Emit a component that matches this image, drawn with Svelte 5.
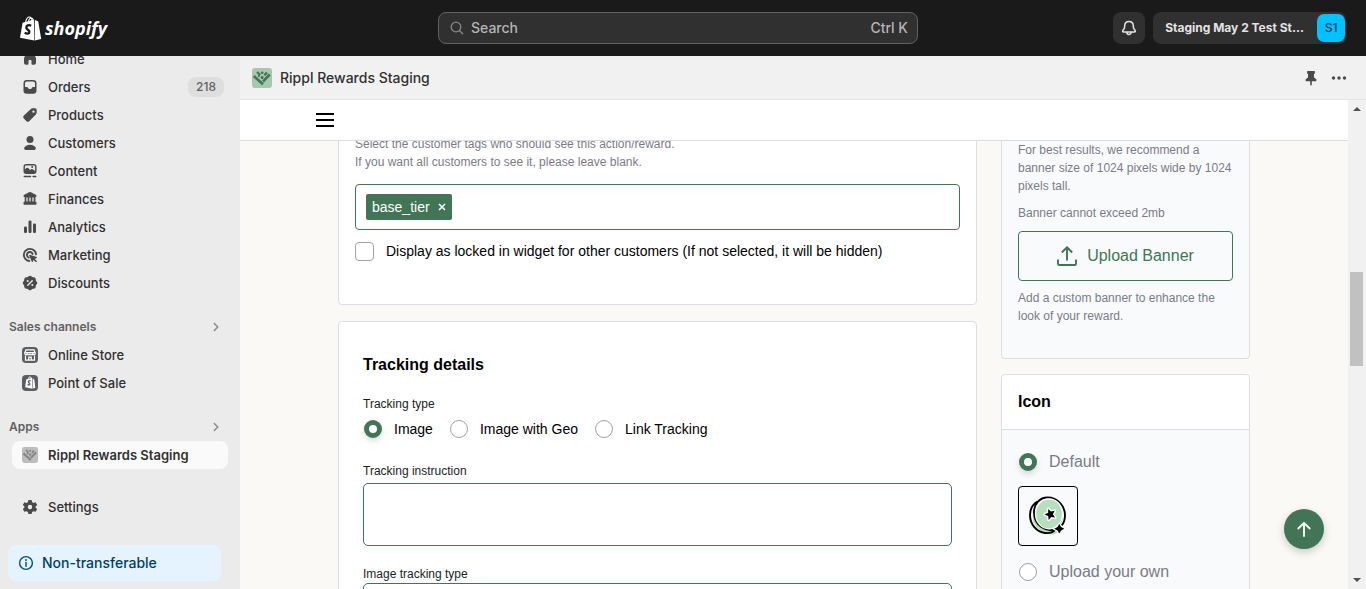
<script>
  const nav = [
    { name: 'Home', icon: 'home' },
    { name: 'Orders', icon: 'orders', badge: '218' },
    { name: 'Products', icon: 'products' },
    { name: 'Customers', icon: 'customers' },
    { name: 'Content', icon: 'content' },
    { name: 'Finances', icon: 'finances' },
    { name: 'Analytics', icon: 'analytics' },
    { name: 'Marketing', icon: 'marketing' },
    { name: 'Discounts', icon: 'discounts' }
  ];
  const channels = [
    { name: 'Online Store', icon: 'store' },
    { name: 'Point of Sale', icon: 'pos' }
  ];
  const trackingTypes = ['Image', 'Image with Geo', 'Link Tracking'];
  let tracking = $state('Image');
  let iconChoice = $state('default');
  let locked = $state(false);
  let instruction = $state('');
</script>

{#snippet glyph(name)}
  <svg class="icon" viewBox="0 0 20 20" fill="currentColor" aria-hidden="true">
    {#if name === 'home'}
      <path d="M8.3 4a2.5 2.5 0 0 1 3.4 0l3.3 3.2a3.2 3.2 0 0 1 1 2.3v4.3a2 2 0 0 1-2 2h-1.500a1 1 0 0 1-1-1V12a1 1 0 0 0-1-1h-1a1 1 0 0 0-1 1v2.800a1 1 0 0 1-1 1H6a2 2 0 0 1-2-2V9.500a3.200 3.200 0 0 1 1-2.300z" />
    {:else if name === 'orders'}
      <path fill-rule="evenodd" d="M6.800 3h6.400A3.300 3.300 0 0 1 16.500 6.300v7.200a3.200 3.200 0 0 1-3.200 3.200H6.700a3.200 3.200 0 0 1-3.200-3.200V6.300A3.300 3.300 0 0 1 6.800 3zm.2 1.500c-1.100 0-2 .8-2 1.900V10h1.700c.6 0 1.100.3 1.400.8l.3.600c.3.400.9.600 1.600.600s1.300-.2 1.600-.6l.3-.6c.3-.5.8-.8 1.400-.8H15V6.400c0-1.100-.9-1.900-2-1.900z" />
    {:else if name === 'products'}
      <path fill-rule="evenodd" d="M10.600 4.200A3 3 0 0 1 12.700 3.300h2.200a1.800 1.800 0 0 1 1.800 1.800v2.200a3 3 0 0 1-.9 2.100l-6.400 6.500a2.200 2.200 0 0 1-3.200 0l-2.300-2.300a2.200 2.200 0 0 1 0-3.200zM13.500 7.800a1.200 1.200 0 1 0 0-2.400 1.200 1.200 0 0 0 0 2.400z" />
    {:else if name === 'customers'}
      <circle cx="10" cy="6.500" r="3.500" />
      <path d="M4.300 14.600C5.300 12.700 7.500 11.700 10 11.700s4.700 1 5.700 2.900c.6 1.100-.2 2.400-1.400 2.400H5.700c-1.200 0-2-1.300-1.400-2.400z" />
    {:else if name === 'content'}
      <path fill-rule="evenodd" d="M6.200 3h7.600a2.700 2.700 0 0 1 2.700 2.700v4.600a2.700 2.700 0 0 1-2.700 2.700H6.200a2.700 2.700 0 0 1-2.700-2.700V5.700A2.700 2.700 0 0 1 6.200 3zm.1 1.400c-.8 0-1.400.5-1.400 1.300v2.700l1.500-1.300a1.300 1.300 0 0 1 1.700 0l2 2 1-.8a1.300 1.300 0 0 1 1.600 0l2.400 1.800V5.700c0-.8-.6-1.300-1.400-1.300zM12.200 7a1 1 0 1 0 0-2 1 1 0 0 0 0 2zM4.300 14.700h6.200a.7.7 0 0 1 0 1.500H4.300a.7.7 0 0 1 0-1.500zm8.800 0h2.600a.7.7 0 0 1 0 1.500h-2.600a.7.7 0 0 1 0-1.500z" />
    {:else if name === 'finances'}
      <path d="M9 3.200a2.300 2.300 0 0 1 2 0l4.700 2.500c.5.300.8.700.8 1.200 0 .7-.5 1.100-1.100 1.100v4.700h.3c.5 0 .8.400.8.800v1.300c0 .7-.5 1-1 1h-11c-.6 0-1-.4-1-1v-1.300c0-.4.300-.8.800-.8h.4V8c-.7 0-1.200-.5-1.200-1.100 0-.5.3-.9.800-1.200z" />
      <path stroke="#ebebeb" stroke-width="1.300" d="M7 8.500v4M10 8.500v4M13 8.500v4" />
    {:else if name === 'analytics'}
      <rect x="4" y="9.500" width="3" height="6.500" rx="1.200" />
      <rect x="8.500" y="3.500" width="3" height="12.500" rx="1.200" />
      <rect x="13" y="6.500" width="3" height="9.500" rx="1.200" />
    {:else if name === 'marketing'}
      <g fill="none" stroke="currentColor" stroke-width="1.900" stroke-linecap="round">
        <path d="M9.300 16A6.100 6.100 0 1 1 16 9.300" />
        <path d="M8.700 12.500A2.900 2.900 0 1 1 12.600 8.900" />
      </g>
      <path d="M9.900 9.700l6.700 2.200c.5.200.5.800 0 1l-1.800 1 2 2c.5.500-.6 1.600-1.100 1.100l-2-2-1 1.700c-.2.400-.8.400-1-.1L9.200 10.400c-.1-.4.300-.8.700-.7z" />
    {:else if name === 'discounts'}
      <g><rect x="4.300" y="4.300" width="11.400" height="11.400" rx="2" /><rect x="4.300" y="4.300" width="11.400" height="11.400" rx="2" transform="rotate(45 10 10)" /></g>
      <path stroke="#ebebeb" stroke-width="1.400" stroke-linecap="round" d="M7.800 12.200l4.400-4.400" /><circle cx="7.700" cy="8" r="1" fill="#ebebeb" /><circle cx="12.300" cy="12" r="1" fill="#ebebeb" />
    {:else if name === 'store'}
      <rect x="2" y="2" width="16" height="16" rx="4" fill="#5c5f62" />
      <path fill="none" stroke="#fff" stroke-width="1.200" d="M6 4.800h8l1.300 3.400c0 2-2.600 2-2.700.2 0 1.800-2.600 1.800-2.600 0 0 1.800-2.600 1.800-2.600 0-.1 1.800-2.700 1.800-2.700-.2zM4.800 7.600h10.400M5.500 10.500v4.700h9v-4.700M8.800 15v-2.800h2.400V15" />
    {:else if name === 'pos'}
      <rect x="2" y="2" width="16" height="16" rx="4" fill="#5c5f62" />
      <path fill="#fff" d="M6.200 6.400l5.800-1.600.6 10.900-7.500-1.500zM12.600 5.200l1.700 1.600 1 7.900-2.100.8z" />
      <path d="M8.300 5.600c.5-2 2.400-2.300 3-.5" fill="none" stroke="#fff" />
      <path d="M10.700 8c-1.300-.6-2.500-.1-2.400.9.100 1 1.700 1.100 1.600 2.200-.1 1-1.300 1-2.300.3" fill="none" stroke="#5c5f62" stroke-width="1.300" />
    {:else if name === 'settings'}
      <path fill-rule="evenodd" d="M8.400 3h3.200l.5 2.100 1.400.8 2.100-.6 1.600 2.700-1.600 1.400v1.300l1.600 1.400-1.600 2.700-2.100-.6-1.400.8-.5 2H8.400l-.5-2-1.400-.8-2.100.6-1.600-2.700 1.600-1.400V9.400L2.800 8l1.600-2.700 2.100.6 1.400-.8zM10 12.200a2.200 2.200 0 1 0 0-4.400 2.200 2.200 0 0 0 0 4.400z" />
    {/if}
  </svg>
{/snippet}

{#snippet rippl(bg, fg)}
  <svg class="icon" viewBox="0 0 20 20" aria-hidden="true">
    <rect width="20" height="20" rx="3" fill={bg} />
    <g stroke={fg} stroke-width="2.600">
      <path d="M1.700 8l9.300 8.300M11 13.500l2.600-2.600M12.800 11.700l4.900-5.200" />
      <path d="M5 4l3.200 3M12.400 7.300l2.500-2.700" stroke-width="2.300" />
    </g>
    <g fill={fg}><circle cx="10.100" cy="9.400" r="1.500" /><circle cx="10.200" cy="4.700" r="1.300" /><circle cx="6.900" cy="8" r="1.100" /></g>
  </svg>
{/snippet}

{#snippet chevron()}
  <svg class="chevron" viewBox="0 0 16 16" aria-hidden="true"><path d="M6.300 4.500L9.800 8l-3.500 3.500" fill="none" stroke="#8a8a8a" stroke-width="1.500" stroke-linecap="round" stroke-linejoin="round" /></svg>
{/snippet}

<div class="shell">
  <header class="topbar">
    <a class="logo" href="#home">
      <svg viewBox="0 0 22 25" aria-hidden="true">
        <path fill="#fff" d="M2.600 6.800L14 3.400l.3 21.100L0 21.800z" />
        <path fill="#fff" d="M14.800 4l3.400 1.200 3 17.800-6.400 1.500z" />
        <path d="M5.600 6.400C6.200 3 8 1 9.500 1c1.800 0 2.400 2 2.500 4M8.400 5.400C9 3 10.600 1.800 11.700 2c1 .2 1.500 1.200 1.700 2.500" fill="none" stroke="#fff" stroke-width="1.100" />
        <path d="M11.200 9.700c-2.500-1.200-5-.2-4.900 1.900.1 2 3.200 2.300 3.100 4.400-.1 2-2.700 2-4.700.6" fill="none" stroke="#1a1a1a" stroke-width="2.300" />
      </svg>
      <span>shopify</span>
    </a>
    <button class="search">
      <svg viewBox="0 0 16 16" aria-hidden="true"><g fill="none" stroke="#8a8a8a" stroke-width="1.300" stroke-linecap="round"><circle cx="7" cy="7" r="4.800" /><path d="M10.700 10.700l3 3" /></g></svg>
      <span>Search</span><span class="keys">Ctrl K</span>
    </button>
    <div class="account">
      <button class="bell" aria-label="Notifications">
        <svg class="icon" viewBox="0 0 20 20" aria-hidden="true"><path d="M10 3.500c-2.700 0-4.200 2-4.300 4.300L5.500 10l-1.700 2.700c-.4.700 0 1.300.7 1.300h11c.7 0 1.100-.6.700-1.300L14.500 10l-.2-2.200C14.200 5.500 12.700 3.500 10 3.500zM7.800 14.200a2.200 2.200 0 0 0 4.400 0" fill="none" stroke="#e3e3e3" stroke-width="1.500" stroke-linejoin="round" /></svg>
      </button>
      <button class="shop"><span class="shop-name">Staging May 2 Test St...</span><span class="avatar">S1</span></button>
    </div>
  </header>

  <div class="body">
    <aside class="sidebar">
      <nav>
        <ul>
          {#each nav as item}
            <li><a href="#{item.icon}">{@render glyph(item.icon)}<span>{item.name}</span>{#if item.badge}<span class="badge">{item.badge}</span>{/if}</a></li>
          {/each}
        </ul>
        <button class="group">Sales channels {@render chevron()}</button>
        <ul>
          {#each channels as item}
            <li><a href="#{item.icon}">{@render glyph(item.icon)}<span>{item.name}</span></a></li>
          {/each}
        </ul>
        <button class="group">Apps {@render chevron()}</button>
        <ul>
          <li><a class="current" href="#rippl"><span class="app-icon">{@render rippl('#bdbdbd', '#858585')}</span><span>Rippl Rewards Staging</span></a></li>
          <li class="settings"><a href="#settings">{@render glyph('settings')}<span>Settings</span></a></li>
        </ul>
      </nav>
      <button class="notice">
        <svg viewBox="0 0 20 20" aria-hidden="true"><circle cx="10" cy="10" r="8" fill="none" stroke="#00527c" stroke-width="1.800" /><path d="M10 9.200v4.800" stroke="#00527c" stroke-width="1.800" stroke-linecap="round" /><circle cx="10" cy="6.300" r="1.200" fill="#00527c" /></svg>
        Non-transferable
      </button>
    </aside>

    <main>
      <div class="appbar">
        {@render rippl('#a7c7ae', '#417556')}
        <h1>Rippl Rewards Staging</h1>
        <button class="plain" aria-label="Pin"><svg class="icon" viewBox="0 0 20 20" fill="#4a4a4a" aria-hidden="true"><path d="M6.700 3h6.600c.4 0 .6.300.6.600v1.600c0 .4-.3.600-.6.600H13v3.700l2 1.500c.3.200.4.500.4.800v.8c0 .4-.3.700-.7.700h-3.900v3.400l-.8 1-.8-1v-3.400H5.300a.7.7 0 0 1-.7-.7v-.8c0-.3.100-.6.400-.8l2-1.500V5.800h-.3c-.3 0-.6-.2-.6-.6V3.600c0-.3.200-.6.600-.6z" /></svg></button>
        <button class="plain" aria-label="More actions"><svg class="icon" viewBox="0 0 20 20" fill="#4a4a4a" aria-hidden="true"><circle cx="4.500" cy="10" r="1.700" /><circle cx="10" cy="10" r="1.700" /><circle cx="15.500" cy="10" r="1.700" /></svg></button>
      </div>

      <div class="frame">
        <div class="app">
          <div class="menubar">
            <button class="plain" aria-label="Menu"><svg class="burger" viewBox="0 0 18 14" aria-hidden="true"><path d="M0 1h18M0 7h18M0 13h18" stroke="#000" stroke-width="2" /></svg></button>
          </div>
          <div class="page">
            <div class="column">
              <section class="card tags">
                <p>Select the customer tags who should see this action/reward.<br />If you want all customers to see it, please leave blank.</p>
                <div class="tagbox"><span class="tag">base_tier <button aria-label="Remove base_tier"><svg viewBox="0 0 8 8" aria-hidden="true"><path d="M1 1l6 6M7 1L1 7" stroke="#fff" stroke-width="1.600" /></svg></button></span></div>
                <label class="choice"><input type="checkbox" bind:checked={locked} /><span>Display as locked in widget for other customers (If not selected, it will be hidden)</span></label>
              </section>

              <section class="card details">
                <h2>Tracking details</h2>
                <fieldset>
                  <legend>Tracking type</legend>
                  <div class="radios">
                    {#each trackingTypes as type}
                      <label class="choice"><input type="radio" name="tracking" value={type} bind:group={tracking} /><span>{type}</span></label>
                    {/each}
                  </div>
                </fieldset>
                <label class="field" for="instruction">Tracking instruction</label>
                <textarea id="instruction" bind:value={instruction}></textarea>
                <label class="field" for="image-type">Image tracking type</label>
                <select id="image-type"><option value=""></option></select>
              </section>
            </div>

            <div class="column side">
              <section class="card banner">
                <p>For best results, we recommend a banner size of 1024 pixels wide by 1024 pixels tall.</p>
                <p>Banner cannot exceed 2mb</p>
                <button class="upload">
                  <svg class="icon" viewBox="0 0 20 20" aria-hidden="true"><path d="M10 14.500V1.500M4.800 6.500L10 1.300l5.200 5.200M1 13.500v4.200c0 .8.500 1.300 1.300 1.300h15.400c.8 0 1.300-.5 1.300-1.300v-4.200" fill="none" stroke="#417556" stroke-width="1.900" /></svg>
                  Upload Banner
                </button>
                <p>Add a custom banner to enhance the look of your reward.</p>
              </section>

              <section class="card icons">
                <h2>Icon</h2>
                <div class="options">
                  <label class="choice"><input type="radio" name="icon" value="default" bind:group={iconChoice} /><span>Default</span></label>
                  <div class="preview">
                    <svg viewBox="0 0 40 42" aria-hidden="true">
                      <ellipse cx="21" cy="20.500" rx="14" ry="16" fill="#b5dfbd" />
                      <ellipse cx="23" cy="35.500" rx="8" ry="4" fill="#b5dfbd" />
                      <path d="M5 26c3 8 8 11 14 11l-8-8-5-11z" fill="#b5dfbd" />
                      <g fill="none" stroke="#000" stroke-width="1.900">
                        <path d="M9.500 6.500C4.500 9.500 2 14.500 2 20c0 9.500 6.500 17 15 18 3.500.4 7-.4 9.500-2" />
                        <path d="M28 34.400c-9.500 3.300-22-4-22-17.200C6 8.500 12 2.500 19.500 2.500 29.500 2.500 37 11 37 20.500c0 4-1.300 7.500-3.300 10" />
                      </g>
                      <ellipse cx="21" cy="18.800" rx="13.500" ry="15" fill="none" stroke="#f9fafc" stroke-width="1.300" />
                      <path d="M20.300 13.900l2.600 2.700 3.800-.8-1.800 3.500 2.100 3.300-3.800-.7-2.500 3-.5-4-3.600-1.500 3.500-1.700z" fill="#000" stroke="#f9fafc" stroke-width="3" stroke-linejoin="round" paint-order="stroke" />
                      <path d="M31.300 29l1.800 3 3.200 1.700-3.200 1.700-1.800 3.100-1.800-3.100-3.200-1.700 3.200-1.700z" fill="#000" stroke="#f9fafc" stroke-width="2.400" paint-order="stroke" />
                    </svg>
                  </div>
                  <label class="choice"><input type="radio" name="icon" value="own" bind:group={iconChoice} /><span>Upload your own</span></label>
                </div>
              </section>
            </div>
          </div>
          <button class="to-top" aria-label="Back to top"><svg viewBox="0 0 16 16" aria-hidden="true"><path d="M8 15V2M2.300 7.500L8 1.800l5.700 5.700" fill="none" stroke="#fff" stroke-width="1.800" stroke-linecap="round" stroke-linejoin="round" /></svg></button>
        </div>
        <div class="scrollbar" aria-hidden="true">
          <svg viewBox="0 0 8 4"><path d="M0 4l4-4 4 4z" fill="#505050" /></svg>
          <div class="track"><div class="before"></div><div class="thumb"></div><div class="after"></div></div>
          <svg viewBox="0 0 8 4"><path d="M0 0l4 4 4-4z" fill="#505050" /></svg>
        </div>
      </div>
    </main>
  </div>
</div>

<style>
  :global(body) { background: #ebebeb; }
  .shell, .shell * { box-sizing: border-box; }
  .shell { height: 100vh; display: flex; flex-direction: column; overflow: hidden; font: 500 13px/20px Inter, sans-serif; color: #303030; }
  button { font: inherit; color: inherit; border: 0; padding: 0; background: none; cursor: pointer; }
  a { color: inherit; text-decoration: none; }
  ul { list-style: none; margin: 0; padding: 0 12px; }
  p, h1, h2 { margin: 0; }
  svg { display: block; flex: none; }
  .icon { width: 20px; height: 20px; }

  .topbar { flex: none; height: 56px; display: grid; grid-template-columns: 1fr 480px 1fr; align-items: center; column-gap: 8px; padding: 0 20px 0 10px; background: #1a1a1a; }
  .logo { display: flex; align-items: center; gap: 3px; padding-left: 10px; color: #fff; font: italic 700 18px/24px "Open Sans", sans-serif; }
  .logo svg { width: 22px; height: 25px; }
  .search { height: 32px; display: flex; align-items: center; gap: 6px; padding: 0 9px 0 10px; border: 1px solid #616161; border-radius: 8px; background: #303030; color: #b5b5b5; font-size: 14px; font-weight: 450; }
  .search svg { width: 16px; height: 16px; }
  .keys { margin-left: auto; }
  .account { display: flex; justify-content: flex-end; gap: 8px; }
  .bell { width: 32px; height: 32px; border-radius: 8px; background: #303030; display: grid; place-items: center; }
  .shop { height: 32px; display: flex; align-items: center; gap: 13px; padding: 0 1px 0 12px; border-radius: 8px; background: #303030; color: #e3e3e3; font-size: 12px; font-weight: 650; white-space: nowrap; }
  .avatar { width: 28px; height: 28px; line-height: 28px; border-radius: 7px; background: #00c2ff; color: #003d5c; font-weight: 450; }

  .body { flex: 1; min-height: 0; display: flex; }
  .sidebar { width: 240px; flex: none; display: flex; flex-direction: column; justify-content: space-between; overflow: hidden; background: #ebebeb; padding-bottom: 8px; }
  nav { margin-top: -11px; flex: none; }
  nav a { height: 28px; padding: 0 4px 0 8px; display: flex; align-items: center; gap: 8px; border-radius: 8px; }
  nav a > .icon { color: #4a4a4a; }
  .badge { margin-left: auto; background: #dedede; border-radius: 8px; padding: 0 8px; font-size: 12px; color: #616161; }
  .group { width: 100%; height: 28px; margin-top: 16px; padding: 0 16px 0 9px; display: flex; align-items: center; justify-content: space-between; color: #616161; font-size: 12px; font-weight: 600; }
  .chevron { width: 16px; height: 16px; }
  .current { background: #fafafa; font-weight: 600; }
  .app-icon { width: 20px; padding: 2px; }
  .app-icon .icon { width: 16px; height: 16px; }
  .settings { margin-top: 24px; }
  .notice { height: 36px; margin: 0 19px 0 8px; padding: 0 10px; display: flex; align-items: center; gap: 8px; border-radius: 8px; background: #e5f3ff; color: #00405f; font-size: 14px; font-weight: 550; }
  .notice svg { width: 16px; height: 16px; }

  main { flex: 1; min-width: 0; display: flex; flex-direction: column; }
  .appbar { flex: none; height: 44px; padding: 0 17px 0 12px; display: flex; align-items: center; gap: 8px; background: #f1f1f1; border-bottom: 1px solid #e3e3e3; }
  .appbar h1 { margin-right: auto; font-size: 14px; font-weight: 450; }
  .frame { flex: 1; min-height: 0; display: flex; }
  .app { flex: 1; min-width: 0; position: relative; display: flex; flex-direction: column; background: #faf9f5; font: 400 14px/20px "Liberation Sans", Arial, sans-serif; color: #000; }
  .menubar { flex: none; height: 41px; display: flex; align-items: center; padding-left: 76px; background: #fff; border-bottom: 1px solid #dcdde1; }
  .burger { width: 18px; height: 14px; }
  .page { flex: 1; min-height: 0; overflow: hidden; display: grid; grid-template-columns: minmax(0, 1fr) 249px; gap: 24px; padding: 0 98px; align-items: start; }
  .column { display: flex; flex-direction: column; gap: 16px; margin-top: -23px; }
  .side { gap: 15px; }
  .card { border: 1px solid #dcdde1; border-radius: 4px; background: #fff; }
  .card p { font-size: 12px; line-height: 18px; color: #7b7b88; }
  .tags { padding: 16px 16px 43px; }
  .tagbox { height: 46px; margin: 13px 0 11px; padding: 9px 10px; border: 1px solid #417556; border-radius: 4px; }
  .tag { height: 26px; display: inline-flex; align-items: center; gap: 8px; padding: 0 6px; border-radius: 2px; background: #417556; color: #fff; }
  .tag svg { width: 8px; height: 8px; }
  .choice { display: flex; align-items: center; gap: 12px; }
  input { appearance: none; flex: none; margin: 0 0 0 1px; width: 18px; height: 18px; border: 1px solid #a0a0a8; background: #fff; }
  input[type='radio'] { border-radius: 50%; }
  input[type='radio']:checked { border: 5px solid #417556; box-shadow: 0 3px 6px rgb(0 0 0 / 15%); }
  input[type='checkbox'] { width: 19px; height: 19px; border-radius: 4px; margin-left: 0; }
  input[type='checkbox']:checked { background: #417556; }
  .details { padding: 31px 24px 24px; }
  h2 { font-size: 16px; line-height: 24px; font-weight: 700; }
  fieldset { border: 0; margin: 18px 0 0; padding: 0; min-width: 0; }
  legend, .field { padding: 0; display: block; font-size: 12px; line-height: 18px; color: #1c1c22; }
  .radios { display: flex; gap: 16px; margin-top: 6px; }
  .field { margin-top: 23px; }
  textarea + .field { margin-top: 19px; }
  textarea, select { display: block; width: 100%; border: 1px solid #417556; border-radius: 5px; background: #fff; font: inherit; }
  textarea { height: 63px; margin-top: 3px; resize: none; padding: 8px; }
  select { height: 44px; appearance: none; }
  .banner { background: #f9fafc; padding: 22px 16px 33px; }
  .banner p + p { margin-top: 9px; }
  .upload { width: 100%; height: 50px; margin: 9px 0 8px; display: flex; align-items: center; justify-content: center; gap: 10px; border: 1px solid #417556; border-radius: 4px; color: #417556; font-size: 16px; }
  .icons { background: #f9fafc; }
  .icons h2 { height: 55px; padding: 15px 16px; background: #fff; border-bottom: 1px solid #dcdde1; border-radius: 4px 4px 0 0; }
  .options { padding: 20px 16px; color: #7b7b88; font-size: 16px; line-height: 24px; }
  .preview { width: 60px; height: 60px; margin: 12px 0 14px; display: grid; place-items: center; border: 1px solid #000; border-radius: 4px; }
  .preview svg { width: 40px; height: 42px; }
  .to-top { position: absolute; right: 24px; bottom: 40px; width: 40px; height: 40px; border-radius: 50%; background: #417556; display: grid; place-items: center; box-shadow: 0 3px 8px rgb(0 0 0 / 20%); }
  .to-top svg { width: 16px; height: 16px; }
  .scrollbar { width: 18px; flex: none; padding: 7px 3px 7px 2px; display: flex; flex-direction: column; align-items: center; background: #f1f1f1; }
  .scrollbar svg { width: 8px; height: 4px; }
  .track { flex: 1; width: 100%; padding: 7px 0; display: flex; flex-direction: column; }
  .before { flex: 154; }
  .thumb { flex: 94; background: #c1c1c1; }
  .after { flex: 205; }
</style>
